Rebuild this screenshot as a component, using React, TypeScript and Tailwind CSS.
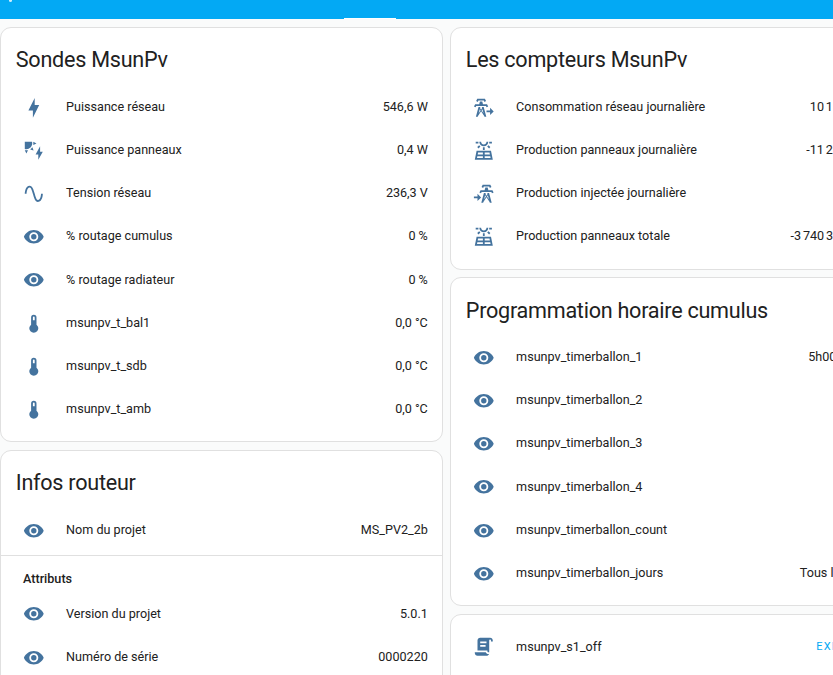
import React from "react";

const eye =
  "M12,9A3,3 0 0,0 9,12A3,3 0 0,0 12,15A3,3 0 0,0 15,12A3,3 0 0,0 12,9M12,17A5,5 0 0,1 7,12A5,5 0 0,1 12,7A5,5 0 0,1 17,12A5,5 0 0,1 12,17M12,4.5C7,4.5 2.73,7.61 1,12C2.73,16.39 7,19.5 12,19.5C17,19.5 21.27,16.39 23,12C21.27,7.61 17,4.5 12,4.5Z";
const bolt = "M11 15H6L13 1V9H18L11 23V15Z";
const solarPower =
  "M11.45,2V5.55L15,3.77L11.45,2M10.45,8L8,10.46L11.75,11.71L10.45,8M2,11.45L3.77,15L5.55,11.45H2M10,2H2V10C2.57,10.17 3.17,10.25 3.77,10.25C7.35,10.26 10.26,7.35 10.27,3.75C10.26,3.16 10.17,2.57 10,2M17,22V16H14L19,7V13H22L17,22Z";
const sine =
  "M16.5,21C13.5,21 12.31,16.76 11.05,12.28C10.14,9.04 9,5 7.5,5C4.11,5 4,11.93 4,12H2C2,11.63 2.06,3 7.5,3C10.5,3 11.71,7.25 12.97,11.74C13.83,14.8 15,19 16.5,19C19.94,19 20.03,12.07 20.03,12H22.03C22.03,12.37 21.97,21 16.5,21Z";
const thermometer =
  "M15 13V5A3 3 0 0 0 9 5V13A5 5 0 1 0 15 13M12 4A1 1 0 0 1 13 5V8H11V5A1 1 0 0 1 12 4Z";
const panels =
  "M4 12L2 22H22L20 12H4M5.64 14H11V16H5.24L5.64 14M4.44 20L4.84 18H11V20H4.44M13 20V18H19.16L19.56 20H13M13 16V14H18.36L18.76 16H13M11 8H13V11H11V8M15.76 7.21L17.18 5.79L19.3 7.91L17.89 9.33L15.76 7.21M4.71 7.91L6.83 5.79L8.24 7.21L6.12 9.33L4.71 7.91M3 2H6V4H3V2M18 2H21V4H18V2M12 7C14.76 7 17 4.76 17 2H15C15 3.65 13.65 5 12 5S9 3.65 9 2H7C7 4.76 9.24 7 12 7Z";
const towerExport =
  "M5.28,5.45L3.5,4.55L4.76,2H13.23L14.5,4.55L12.72,5.44L12,4H6L5.28,5.45M15.62,8H11.09L10.3,5H7.7L6.91,8H2.38L1.1,10.55L2.89,11.44L3.62,10H14.38L15.1,11.45L16.89,10.56L15.62,8M14.77,22H12.7L12.46,21.1L9,15.9L5.53,21.1L5.3,22H3.23L6.12,11H8.19L7.83,12.35L9,14.1L10.16,12.35L9.81,11H11.88L14.77,22M8.4,15L7.5,13.65L6.32,18.13L8.4,15M11.68,18.12L10.5,13.64L9.6,15L11.68,18.12M23,16L19,12V15H15V17H19V20L23,16Z";
const towerImport =
  "M11.28,5.45L9.5,4.55L10.76,2H19.23L20.5,4.55L18.72,5.44L18,4H12L11.28,5.45M21.62,8H17.09L16.3,5H13.7L12.91,8H8.38L7.1,10.55L8.89,11.44L9.62,10H20.38L21.1,11.45L22.89,10.56L21.62,8M20.77,22H18.7L18.46,21.1L15,15.9L11.53,21.1L11.3,22H9.23L12.12,11H14.19L13.83,12.35L15,14.1L16.16,12.35L15.81,11H17.88L20.77,22M14.4,15L13.5,13.65L12.32,18.13L14.4,15M17.68,18.12L16.5,13.64L15.6,15L17.68,18.12M9,16L5,12V15H1V17H5V20L9,16Z";
const script =
  "M17.8,20C17.4,21.2 16.3,22 15,22H5C3.3,22 2,20.7 2,19V18H5L14.2,18C14.6,19.2 15.7,20 17,20H17.8M19,2C20.7,2 22,3.3 22,5V6H20V5C20,4.4 19.6,4 19,4C18.4,4 18,4.4 18,5V18H17C16.4,18 16,17.6 16,17V16H5V5C5,3.3 6.3,2 8,2H19M8,6V8H15V6H8M8,10V12H14V10H8Z";

type RowProps = { icon: string; name: string; value?: string; valueClass?: string };

function Row({ icon, name, value, valueClass = "" }: RowProps) {
  return (
    <div className="flex h-[43.2px] items-center whitespace-nowrap">
      <div className="flex w-9 shrink-0 justify-center pt-[1.2px]">
        <svg viewBox="0 0 24 24" className="size-[21.6px] fill-[#44739e]">
          <path d={icon} />
        </svg>
      </div>
      <div className="ml-[14.5px] flex-1">{name}</div>
      {value && <div className={"shrink-0 " + valueClass}>{value}</div>}
    </div>
  );
}

type CardProps = { title?: string; titleClass?: string; className: string; children: React.ReactNode };

function Card({ title, titleClass = "h-[57.2px] pt-[10px]", className, children }: CardProps) {
  return (
    <section className={"shrink-0 rounded-[11px] border border-[#e0e0e0] bg-white pr-[14.2px] pl-[14.6px] " + className}>
      {title && (
        <h1 className={"pl-[0.2px] text-[21.6px] leading-[43px] tracking-[-0.26px] " + titleClass}>{title}</h1>
      )}
      {children}
    </section>
  );
}

export default function App() {
  return (
    <div className="h-[675px] w-[833px] overflow-hidden bg-[#fafbfb] font-[Roboto,sans-serif] text-[12.6px] leading-[18px] text-[#212121]">
      <header className="flex h-[19px] flex-col justify-between bg-[#03a9f4]">
        <div className="ml-[9px] h-[2px] w-[3px] rounded-b-full bg-white/80" />
        <div className="ml-[344px] h-px w-[52px] bg-white" />
      </header>
      <main className="flex w-[893px] gap-[7px] pt-2">
        <div className="flex w-[443px] shrink-0 flex-col gap-2">
          <Card title="Sondes MsunPv" className="h-[415px]">
            <Row icon={bolt} name="Puissance réseau" value="546,6 W" />
            <Row icon={solarPower} name="Puissance panneaux" value="0,4 W" />
            <Row icon={sine} name="Tension réseau" value="236,3 V" />
            <Row icon={eye} name="% routage cumulus" value="0 %" />
            <Row icon={eye} name="% routage radiateur" value="0 %" />
            <Row icon={thermometer} name="msunpv_t_bal1" value="0,0 °C" />
            <Row icon={thermometer} name="msunpv_t_sdb" value="0,0 °C" />
            <Row icon={thermometer} name="msunpv_t_amb" value="0,0 °C" />
          </Card>
          <Card title="Infos routeur" className="h-[300px]">
            <Row icon={eye} name="Nom du projet" value="MS_PV2_2b" />
            <div className="-mr-[14.2px] -ml-[14.6px] mt-[3.8px] h-[36.8px] border-t border-[#e0e0e0] pt-[14px] pl-[22px] font-medium">
              Attributs
            </div>
            <Row icon={eye} name="Version du projet" value="5.0.1" />
            <Row icon={eye} name="Numéro de série" value="0000220" />
          </Card>
        </div>
        <div className="flex w-[443px] shrink-0 flex-col gap-2">
          <Card title="Les compteurs MsunPv" className="h-[243px]">
            <Row icon={towerExport} name="Consommation réseau journalière" value="10 1" valueClass="w-[68px] [word-spacing:-1.3px]" />
            <Row icon={panels} name="Production panneaux journalière" value="-11 2" valueClass="w-[71.5px] [word-spacing:-1.3px]" />
            <Row icon={towerImport} name="Production injectée journalière" />
            <Row icon={panels} name="Production panneaux totale" value="-3 740 3" valueClass="w-[87.3px] [word-spacing:-1.3px]" />
          </Card>
          <Card title="Programmation horaire cumulus" titleClass="h-[57.5px] pt-[11px]" className="-mt-px h-[329px]">
            <Row icon={eye} name="msunpv_timerballon_1" value="5h00" valueClass="w-[69.6px]" />
            <Row icon={eye} name="msunpv_timerballon_2" />
            <Row icon={eye} name="msunpv_timerballon_3" />
            <Row icon={eye} name="msunpv_timerballon_4" />
            <Row icon={eye} name="msunpv_timerballon_count" />
            <Row icon={eye} name="msunpv_timerballon_jours" value="Tous l" valueClass="w-[78px]" />
          </Card>
          <Card className="h-[100px] pt-[10px]">
            <Row
              icon={script}
              name="msunpv_s1_off"
              value="EXÉ"
              valueClass="w-[61.6px] text-[11px] tracking-[1.2px] text-[#03a9f4]"
            />
          </Card>
        </div>
      </main>
    </div>
  );
}
